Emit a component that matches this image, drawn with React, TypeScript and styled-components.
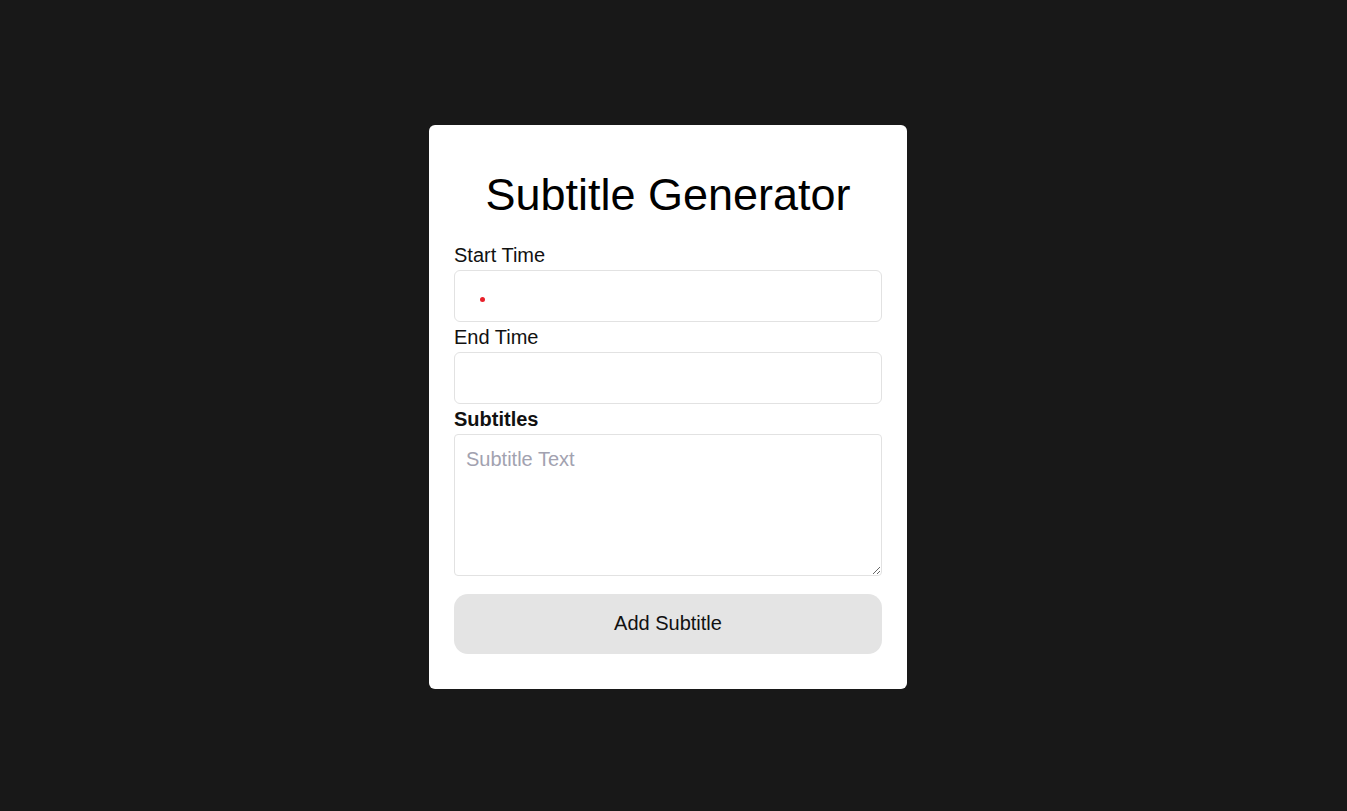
import React from 'react';
import styled, {createGlobalStyle} from 'styled-components';

const Global = createGlobalStyle`
  html, body {
    margin: 0;
    background: #181818;
    font-family: Arial, "Liberation Sans", sans-serif;
  }
`;

const Page = styled.div`
  min-height: 811px;
  display: flex;
  justify-content: center;
  align-items: center;
  padding: 2px 11px 0 0;
  box-sizing: border-box;
`;

const Card = styled.form`
  width: 478px;
  box-sizing: border-box;
  background: #fff;
  border-radius: 6px;
  padding: 25px 25px 35px;
  display: flex;
  flex-direction: column;
`;

const Title = styled.h1`
  margin: 19px 0 23px;
  font-size: 45px;
  font-weight: 400;
  text-align: center;
  color: #000;
`;

const Label = styled.label<{ $bold?: boolean }>`
  font-size: 20px;
  line-height: 22px;
  color: #111;
  font-weight: ${p => (p.$bold ? 700 : 400)};
  margin-bottom: 4px;
`;

const Field = styled.div`
  position: relative;
  margin-bottom: 4px;
`;

const Input = styled.input`
  display: block;
  width: 100%;
  height: 52px;
  box-sizing: border-box;
  border: 1px solid #e2e2e2;
  border-radius: 6px;
  padding: 0 12px;
  font-size: 20px;
  font-family: inherit;
  outline: none;
`;

const Dot = styled.span`
  position: absolute;
  left: 26px;
  top: 27px;
  width: 5px;
  height: 5px;
  border-radius: 50%;
  background: #e8202a;
`;

const TextArea = styled.textarea`
  display: block;
  width: 100%;
  height: 142px;
  box-sizing: border-box;
  border: 1px solid #e2e2e2;
  border-radius: 4px;
  padding: 13px 11px;
  font-size: 20px;
  font-family: inherit;
  outline: none;
  resize: vertical;
  &::placeholder {
    color: #a2a2b0;
  }
`;

const Button = styled.button`
  margin-top: 18px;
  height: 60px;
  border: none;
  border-radius: 14px;
  background: #e4e4e4;
  color: #111;
  font-size: 20px;
  font-family: inherit;
  cursor: pointer;
`;

const App: React.FC = () => {
  return (
    <Page>
      <Global />
      <Card onSubmit={e => e.preventDefault()}>
        <Title>Subtitle Generator</Title>
        <Label>Start Time</Label>
        <Field>
          <Input type="text" />
          <Dot />
        </Field>
        <Label>End Time</Label>
        <Field>
          <Input type="text" />
        </Field>
        <Label $bold>Subtitles</Label>
        <TextArea placeholder="Subtitle Text" />
        <Button type="submit">Add Subtitle</Button>
      </Card>
    </Page>
  );
};

export default App;
